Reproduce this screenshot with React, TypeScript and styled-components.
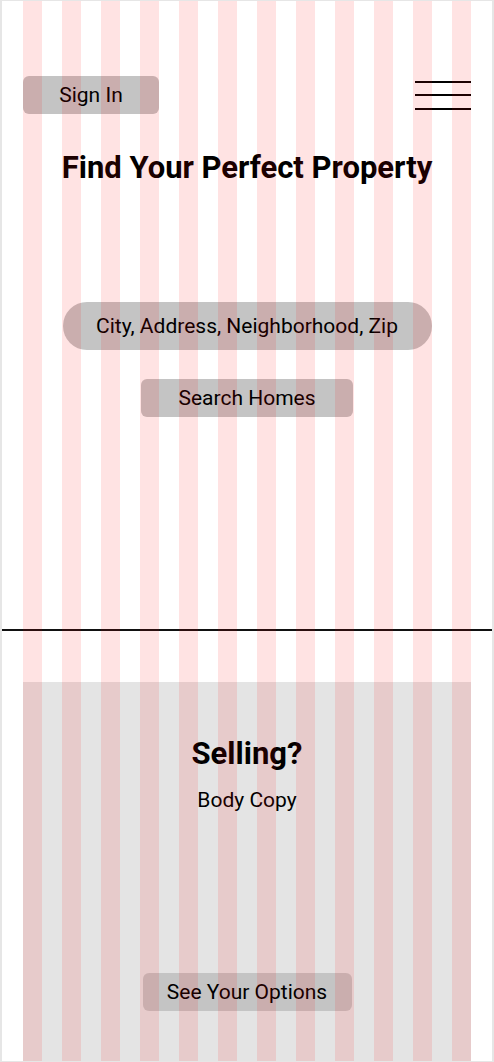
import React from 'react';
import styled, { createGlobalStyle } from 'styled-components';

const GlobalStyle = createGlobalStyle`
  * {
    box-sizing: border-box;
  }
  body {
    margin: 0;
    background: #ffffff;
    font-family: Roboto, 'Liberation Sans', Arial, sans-serif;
    color: #000000;
  }
`;

const Frame = styled.div`
  position: relative;
  width: 100%;
  min-height: 100vh;
  display: flex;
  flex-direction: column;
  border-style: solid;
  border-color: #e6e6e6;
  border-width: 1px 2px;
  background: #ffffff;
`;

const Hero = styled.section`
  height: 628px;
  display: flex;
  flex-direction: column;
  align-items: center;
  padding: 75px 21px 0;
`;

const Header = styled.header`
  align-self: stretch;
  display: flex;
  justify-content: space-between;
  align-items: center;
  height: 38px;
`;

const Button = styled.button<{ $width: number }>`
  width: ${(p) => p.$width}px;
  height: 38px;
  border: none;
  border-radius: 6px;
  background: #c4c4c4;
  font-family: Roboto, 'Liberation Sans', Arial, sans-serif;
  font-size: 21px;
  color: #000000;
  padding: 0;
  display: flex;
  justify-content: center;
  align-items: center;
  cursor: pointer;
`;

const Burger = styled.button`
  width: 56px;
  display: flex;
  flex-direction: column;
  gap: 11.5px;
  padding: 0;
  border: none;
  background: transparent;
  cursor: pointer;
`;

const BurgerLine = styled.span`
  display: block;
  height: 2px;
  background: #000000;
`;

const Title = styled.h1<{ $top: number }>`
  margin: ${(p) => p.$top}px 0 0;
  font-size: 31px;
  line-height: 36px;
  font-weight: 700;
  text-align: center;
`;

const SearchInput = styled.div`
  margin-top: 116px;
  width: 369px;
  height: 48px;
  border-radius: 24px;
  background: #c4c4c4;
  display: flex;
  justify-content: center;
  align-items: center;
  font-size: 21px;
`;

const SearchButton = styled(Button)`
  margin-top: 29px;
`;

const Divider = styled.hr`
  margin: 0;
  border: none;
  height: 2px;
  background: #111111;
`;

const Selling = styled.section`
  flex: 1;
  margin: 51px 21px 0;
  background: #e4e4e4;
  display: flex;
  flex-direction: column;
  align-items: center;
  padding: 54px 0 50px;
`;

const BodyCopy = styled.p`
  margin: 16px 0 0;
  font-size: 21px;
  line-height: 25px;
`;

const OptionsButton = styled(Button)`
  margin-top: auto;
`;

const GridOverlay = styled.div`
  position: absolute;
  inset: 0 21px;
  display: grid;
  grid-template-columns: repeat(12, 19px);
  justify-content: space-between;
  pointer-events: none;
`;

const GridColumn = styled.div`
  background: rgba(255, 0, 0, 0.11);
`;

const App: React.FC = () => {
  return (
    <>
      <GlobalStyle />
      <Frame>
        <Hero>
          <Header>
            <Button $width={136}>Sign In</Button>
            <Burger aria-label="Menu">
              <BurgerLine />
              <BurgerLine />
              <BurgerLine />
            </Burger>
          </Header>
          <Title $top={36}>Find Your Perfect Property</Title>
          <SearchInput>City, Address, Neighborhood, Zip</SearchInput>
          <SearchButton $width={212}>Search Homes</SearchButton>
        </Hero>
        <Divider />
        <Selling>
          <Title $top={0}>Selling?</Title>
          <BodyCopy>Body Copy</BodyCopy>
          <OptionsButton $width={209}>See Your Options</OptionsButton>
        </Selling>
        <GridOverlay>
          {Array.from({ length: 12 }).map((_, i) => (
            <GridColumn key={i} />
          ))}
        </GridOverlay>
      </Frame>
    </>
  );
};

export default App;
